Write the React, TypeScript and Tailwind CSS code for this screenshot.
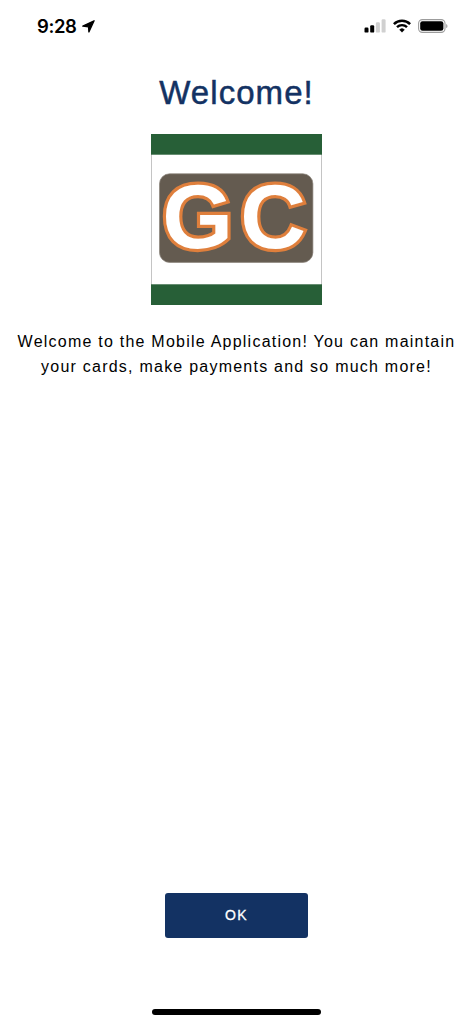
function StatusBar() {
  return (
    <div className="flex h-[52px] items-center justify-between pl-[37px] pr-[25px]">
      <div className="flex items-center gap-[5px]">
        <span className="font-['Inter',sans-serif] text-[18.5px] leading-none font-semibold tracking-[-0.4px] text-black">
          9:28
        </span>
        <svg width="13" height="13" viewBox="0 0 13 13">
          <path d="M12.1 0.8 6.9 12 6.5 6.8 0.8 6.1z" fill="#000" stroke="#000" strokeWidth="1.3" strokeLinejoin="round" />
        </svg>
      </div>
      <div className="flex items-center gap-[7px]">
        <svg width="22" height="14" viewBox="0 0 22 14">
          <rect x="0.5" y="8.6" width="4" height="5" rx="1.2" fill="#000" />
          <rect x="6.2" y="6.2" width="4" height="7.4" rx="1.2" fill="#000" />
          <rect x="11.9" y="3.2" width="4" height="10.4" rx="1.2" fill="#d0d0d0" />
          <rect x="17.6" y="0.2" width="4" height="13.4" rx="1.2" fill="#d0d0d0" />
        </svg>
        <svg width="18" height="14" viewBox="0 0 18 14" fill="none" stroke="#000">
          <path d="M0.9 5.1a11.5 11.5 0 0 1 16.2 0" strokeWidth="2.5" />
          <path d="M4 8.2a7.1 7.1 0 0 1 10 0" strokeWidth="2.4" />
          <path d="M6.6 10.7a3.5 3.5 0 0 1 4.8 0L9 13.2z" fill="#000" strokeWidth="0.5" />
        </svg>
        <svg width="30" height="14" viewBox="0 0 30 14">
          <rect x="0.6" y="0.6" width="26.4" height="12.8" rx="3.8" fill="none" stroke="#9c9c9c" strokeWidth="1.1" />
          <rect x="2.2" y="2.2" width="23.2" height="9.6" rx="2.3" fill="#000" />
          <path d="M28.2 4.9c1.7.6 1.7 3.6 0 4.2z" fill="#9c9c9c" />
        </svg>
      </div>
    </div>
  )
}

function Logo() {
  return (
    <svg width="171" height="171" viewBox="0 0 171 171" role="img" aria-label="GC">
      <rect x="0.5" y="0.5" width="170" height="170" fill="#fff" stroke="#c4c4c4" />
      <rect width="171" height="20.7" fill="#275f37" />
      <rect y="150.3" width="171" height="20.7" fill="#275f37" />
      <rect x="8.5" y="39.8" width="153.4" height="88.6" rx="10" fill="#645b50" stroke="#8b847b" strokeWidth="0.7" />
      {/* outline is painted under the fill so the letters keep their full weight */}
      <g
        className="font-['Liberation_Sans',Arial,sans-serif] text-[91px] font-bold [paint-order:stroke]"
        fill="#fff"
        stroke="#df7f3c"
        strokeWidth="6.4"
      >
        <text x="11.2" y="113.6">G</text>
        <text x="89.2" y="113.6">C</text>
      </g>
    </svg>
  )
}

export default function App() {
  return (
    <div className="flex h-screen w-full flex-col bg-white font-['Liberation_Sans',Arial,sans-serif]">
      <StatusBar />

      <main className="flex flex-1 flex-col items-center">
        <h1 className="mt-[21px] text-[33px] leading-10 tracking-[1.05px] text-[#133263] [-webkit-text-stroke:0.5px_#133263]">
          Welcome!
        </h1>
        <div className="mt-[21px]">
          <Logo />
        </div>
        <p className="mt-6 text-center text-[16px] leading-[25px] tracking-[1.23px] whitespace-nowrap text-black">
          Welcome to the Mobile Application! You can maintain
          <br />
          your cards, make payments and so much more!
        </p>
      </main>

      <footer className="flex flex-col items-center">
        <button className="h-[45px] w-[143px] rounded-[3px] bg-[#133263] text-[14px] tracking-[1.4px] text-white [-webkit-text-stroke:0.3px_#fff]">
          OK
        </button>
        <div className="mt-[71px] mb-[9px] h-[6px] w-[169px] rounded-full bg-black" />
      </footer>
    </div>
  )
}
